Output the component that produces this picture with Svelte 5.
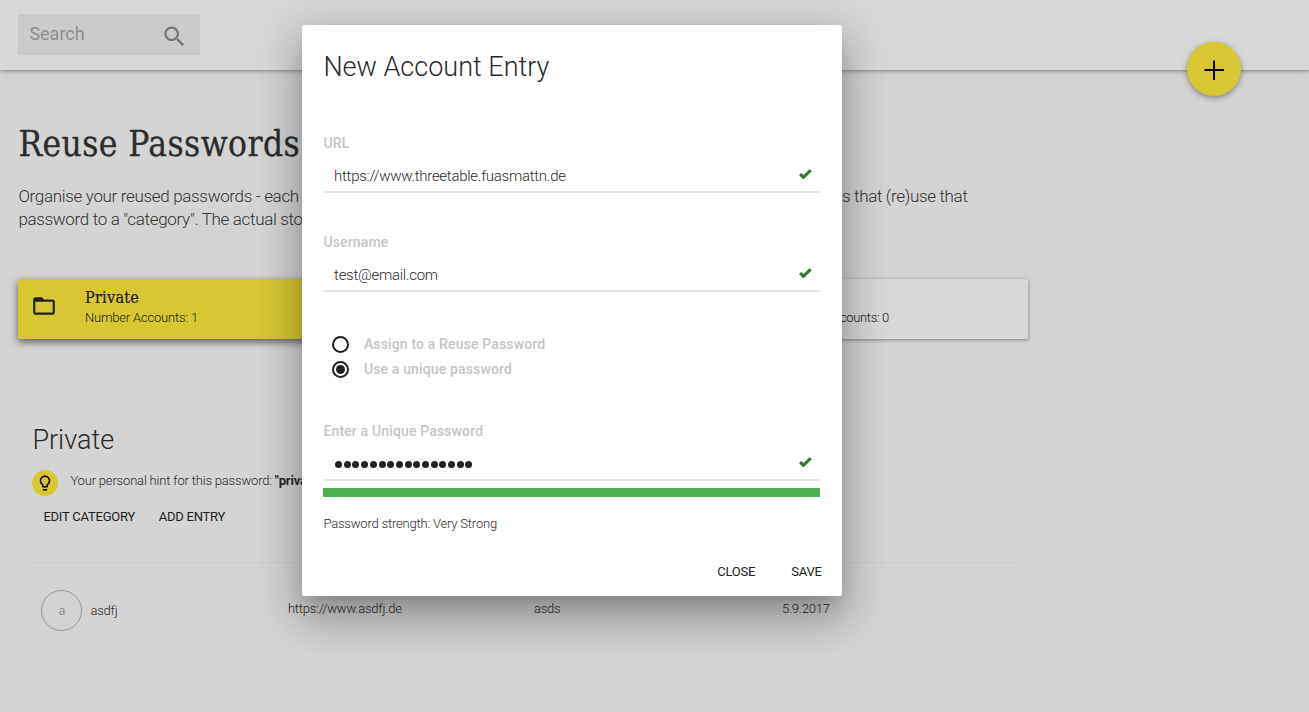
<script lang="ts">
  const dots = '●'.repeat(16);
</script>

{#snippet check()}
  <svg class="check" viewBox="0 0 13 11" aria-hidden="true">
    <path d="M0 6.1 2.2 4.1 4.6 6 10.4.2 12.8 2.2 4.9 10.1 3.7 10Z" />
  </svg>
{/snippet}

<div class="page">
  <header>
    <div class="search">
      <span>Search</span>
      <svg viewBox="0 0 24 24" width="27" height="27"><path d="M15.5 14h-.79l-.28-.27C15.41 12.59 16 11.11 16 9.5 16 5.91 13.09 3 9.5 3S3 5.91 3 9.5 5.91 16 9.5 16c1.61 0 3.09-.59 4.23-1.57l.27.28v.79l5 4.99L20.49 19l-4.99-5zm-6 0C7.01 14 5 11.99 5 9.5S7.01 5 9.5 5 14 7.01 14 9.5 11.99 14 9.5 14z" /></svg>
    </div>
    <button class="fab" aria-label="Add">
      <svg viewBox="0 0 20 20" width="20" height="20"><path d="M10 0.500V20M0.500 10H20" /></svg>
    </button>
  </header>

  <main>
    <h1>Reuse Passwords</h1>
    <div class="intro">
      <p>Organise your reused passwords - each<br />password to a "category". The actual sto</p>
      <p>s that (re)use that</p>
    </div>

    <div class="cards">
      <article class="card active">
        <svg viewBox="0 0 24 24" width="26" height="26"><path d="M20 6h-8l-2-2H4c-1.100 0-1.990.9-1.990 2L2 18c0 1.100.9 2 2 2h16c1.100 0 2-.9 2-2V8c0-1.100-.9-2-2-2zm0 12H4V8h16v10z" /></svg>
        <div>
          <h3>Private</h3>
          <p>Number Accounts: 1</p>
        </div>
      </article>
      <article class="card other"><p>counts: 0</p></article>
    </div>

    <section>
      <h2>Private</h2>
      <div class="hint">
        <i><svg viewBox="0 0 24 24" width="18" height="18"><path d="M9 21c0 .55.45 1 1 1h4c.55 0 1-.45 1-1v-1H9v1zm3-19C8.140 2 5 5.140 5 9c0 2.380 1.190 4.470 3 5.740V17c0 .55.45 1 1 1h6c.55 0 1-.45 1-1v-2.260c1.810-1.270 3-3.360 3-5.740 0-3.860-3.140-7-7-7zm2.850 11.100l-.85.6V16h-4v-2.300l-.85-.6C7.800 12.160 7 10.630 7 9c0-2.760 2.240-5 5-5s5 2.240 5 5c0 1.630-.8 3.160-2.150 4.100z" /></svg></i>
        <p>Your personal hint for this password: <b>"priva</b></p>
      </div>
      <div class="actions"><button>EDIT CATEGORY</button><button>ADD ENTRY</button></div>
      <div class="row">
        <span class="avatar">a</span>
        <span>asdfj</span>
        <span class="col">https://www.asdfj.de</span>
        <span class="col">asds</span>
        <span class="col">5.9.2017</span>
      </div>
    </section>
  </main>
</div>

<div class="dialog" role="dialog" aria-label="New Account Entry">
  <h2>New Account Entry</h2>
  <div class="field">
    <div class="label">URL</div>
    <div class="input"><span>https://www.threetable.fuasmattn.de</span>{@render check()}</div>
  </div>
  <div class="field">
    <div class="label">Username</div>
    <div class="input"><span>test@email.com</span>{@render check()}</div>
  </div>
  <div class="radios">
    <div class="radio"><i></i><span>Assign to a Reuse Password</span></div>
    <div class="radio on"><i></i><span>Use a unique password</span></div>
  </div>
  <div class="field">
    <div class="label">Enter a Unique Password</div>
    <div class="input"><span class="dots">{#each dots as _}<b></b>{/each}</span>{@render check()}</div>
  </div>
  <div class="meter"></div>
  <p class="strength">Password strength: Very Strong</p>
  <footer><button>CLOSE</button><button>SAVE</button></footer>
</div>

<style>
  :global(body) { margin: 0; background: #d4d4d4; overflow: hidden; }
  .page, .dialog { font-family: Roboto, sans-serif; color: #2a2a2a; }
  .page { width: 1309px; height: 712px; overflow: hidden; }
  h1, h2, h3, p { margin: 0; font-weight: 300; white-space: nowrap; }
  button { border: 0; background: none; padding: 0; font: 400 13px/20px Roboto, sans-serif; letter-spacing: -.22px; color: #212121; }
  svg { display: block; flex: none; }

  header { height: 70px; box-sizing: border-box; padding: 14px 67.600px 0 18.400px; display: flex; justify-content: space-between; background: #d8d8d8; box-shadow: 0 1px 6px rgba(0,0,0,.22), 0 1px 3px rgba(0,0,0,.22); }
  .search { width: 182px; height: 41px; box-sizing: border-box; padding: 0 12px 0 11px; display: flex; align-items: center; justify-content: space-between; background: #cacaca; color: #8e8e8e; font-size: 18px; }
  .search span { padding-bottom: 3px; }
  .search svg { fill: #757575; margin-top: 4px; }
  .fab { width: 54px; height: 54px; margin-top: 28px; border-radius: 50%; background: #d8c733; display: flex; align-items: center; justify-content: center; box-shadow: 0 2px 5px rgba(0,0,0,.26), 0 2px 8px rgba(0,0,0,.16); position: relative; }
  .fab svg { fill: none; stroke: #000; stroke-width: 2; margin-top: 2px; }

  main { padding: 51px 0 0 18.400px; width: 1010px; }
  h1 { font: 400 35px/46px "Roboto Slab", "DejaVu Serif Condensed", "DejaVu Serif", serif; font-stretch: condensed; letter-spacing: .42px; color: #2c2c2c; -webkit-text-stroke: .3px #2c2c2c; }
  .intro { margin-top: 18px; height: 94px; display: grid; grid-template-columns: 823.500px 1fr; font-size: 17px; line-height: 23px; letter-spacing: -.33px; color: #333; }
  .cards { display: flex; height: 60px; }
  .card { box-sizing: border-box; border-radius: 2px; font-size: 13px; line-height: 18px; letter-spacing: -.18px; color: #212121; }
  .active { flex: 1; padding: 8px 0 0 13px; display: flex; gap: 27.500px; background: #d8c733; box-shadow: 0 3px 8px rgba(0,0,0,.36), 0 3px 6px rgba(0,0,0,.25); }
  .active svg { fill: #212121; margin-top: 6px; }
  h3 { font: 400 16px/21px "Roboto Slab", "DejaVu Serif Condensed", "DejaVu Serif", serif; font-stretch: condensed; letter-spacing: .3px; -webkit-text-stroke: .2px #212121; padding-bottom: 1px; }
  .other { width: 509px; background: #d8d8d8; padding: 30px 0 0 320.500px; letter-spacing: -.34px; box-shadow: 0 1px 5px rgba(0,0,0,.22), 0 1px 3px rgba(0,0,0,.22); }

  section { padding: 83px 0 0 14px; }
  section h2 { font-size: 27px; line-height: 36px; }
  .hint { display: flex; gap: 12px; margin-top: 12px; font-size: 13px; line-height: 22px; letter-spacing: -.18px; }
  .hint i { width: 26px; height: 26px; border-radius: 50%; background: #d8c733; display: flex; align-items: center; justify-content: center; }
  .hint b { font-weight: 700; }
  .actions { display: flex; gap: 23.500px; padding: 11px 0 35px 11px; border-bottom: 1px solid #cbcbcb; width: 973px; }
  .row { display: grid; grid-template-columns: 49px 197.500px 246px 248px 1fr; padding: 27px 0 0 9px; align-items: center; font-size: 13px; font-weight: 300; letter-spacing: -.2px; }
  .col { padding-bottom: 4px; }
  .avatar { width: 39px; height: 39px; border: 1px solid #999; border-radius: 50%; display: flex; align-items: center; justify-content: center; color: #777; font-size: 12px; }

  .dialog { position: absolute; left: 302px; top: 25px; width: 540px; height: 570.500px; box-sizing: border-box; padding: 24px 21.400px 0; background: #fff; border-radius: 2px; box-shadow: 0 9px 46px 8px rgba(0,0,0,.14), 0 11px 15px -7px rgba(0,0,0,.12), 0 24px 38px 3px rgba(0,0,0,.2); }
  .dialog h2 { font-size: 27px; line-height: 36px; margin-bottom: 47px; }
  .field { height: 99px; }
  .label, .radio { color: #c5c5c5; font-size: 14px; font-weight: 500; line-height: 22px; letter-spacing: .15px; }
  .input { width: 497px; height: 39px; box-sizing: border-box; border-bottom: 2px solid #e8e8e8; display: flex; justify-content: space-between; align-items: center; padding: 6px 8.500px 0 10.700px; font-size: 15px; font-weight: 300; letter-spacing: -.27px; }
  .check { width: 13px; height: 11px; fill: #36753a; margin-top: -3px; }
  .radios { height: 90px; padding: 1.500px 0 0 8.500px; box-sizing: border-box; }
  .radio { display: flex; align-items: center; gap: 15px; height: 25px; }
  .radio i { width: 17px; height: 17px; box-sizing: border-box; border: 2px solid #212121; border-radius: 50%; display: flex; align-items: center; justify-content: center; }
  .on i::after { content: ""; width: 9px; height: 9px; border-radius: 50%; background: #212121; }
  .dots { display: flex; gap: 1.700px; padding-left: 1px; padding-top: 1px; }
  .dots b { width: 7px; height: 7px; border-radius: 50%; background: #212121; }
  .meter { width: 497px; height: 9px; background: #4caf50; border-radius: 1px; margin-top: -31px; }
  .strength { font-size: 13px; line-height: 20px; margin-top: 17px; letter-spacing: -.19px; }
  footer { display: flex; justify-content: flex-end; gap: 36px; margin: 28px -1px 0 0; }
</style>
